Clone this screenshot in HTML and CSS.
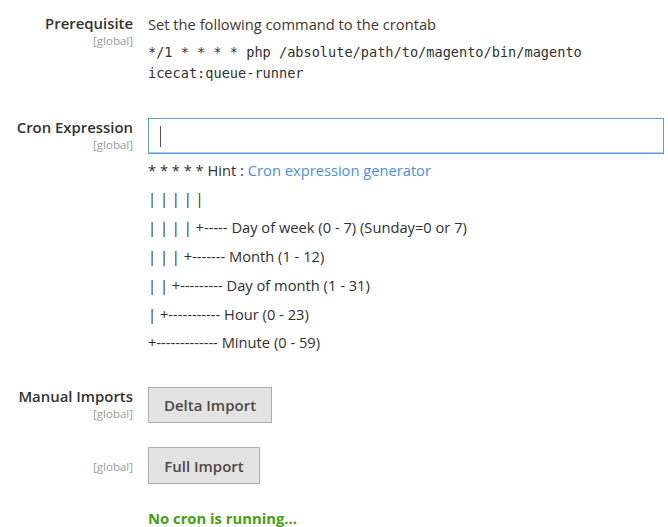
FILE: index.html
```html
<!DOCTYPE html>
<html>
<head>
<meta charset="utf-8">
<link rel="stylesheet" href="styles.css">
</head>
<body>
<div class="form">
  <div class="row row-prereq">
    <div class="label"><span class="name">Prerequisite</span><span class="scope">[global]</span></div>
    <div class="value">
      <div class="text">Set the following command to the crontab</div>
      <div class="code">*/1 * * * * php /absolute/path/to/magento/bin/magento<br>icecat:queue-runner</div>
    </div>
  </div>

  <div class="row row-cron">
    <div class="label"><span class="name">Cron Expression</span><span class="scope">[global]</span></div>
    <div class="value">
      <div class="input-wrap"><input class="input" type="text" value=""><span class="caret"></span></div>
      <div class="hint">
        <div class="line">* * * * * Hint : <a class="link" href="#">Cron expression generator</a></div>
        <div class="line">| | | | |</div>
        <div class="line">| | | | +----- Day of week (0 - 7) (Sunday=0 or 7)</div>
        <div class="line">| | | +------- Month (1 - 12)</div>
        <div class="line">| | +--------- Day of month (1 - 31)</div>
        <div class="line">| +----------- Hour (0 - 23)</div>
        <div class="line">+------------- Minute (0 - 59)</div>
      </div>
    </div>
  </div>

  <div class="row row-delta">
    <div class="label"><span class="name">Manual Imports</span><span class="scope">[global]</span></div>
    <div class="value"><button class="btn btn-delta" type="button">Delta Import</button></div>
  </div>

  <div class="row row-full">
    <div class="label label-only-scope"><span class="scope">[global]</span></div>
    <div class="value"><button class="btn btn-full" type="button">Full Import</button></div>
  </div>

  <div class="row row-status">
    <div class="label"></div>
    <div class="value"><div class="status">No cron is running...</div></div>
  </div>
</div>
</body>
</html>
```

FILE: styles.css
```css
html, body {
  margin: 0;
  padding: 0;
  background: #ffffff;
}

body {
  font-family: "Open Sans", "Noto Sans", sans-serif;
  font-size: 14.7px;
  color: #303030;
  overflow: hidden;
}

.form {
  display: flex;
  flex-direction: column;
  padding-top: 14px;
}

.row {
  display: grid;
  grid-template-columns: 133px 1fr;
  column-gap: 15px;
}

.label {
  display: flex;
  flex-direction: column;
  align-items: flex-end;
  text-align: right;
}

.name {
  font-weight: 600;
  font-size: 14.9px;
  line-height: 19px;
  color: #333333;
  white-space: nowrap;
}

.scope {
  font-size: 11.5px;
  line-height: 13px;
  color: #9a9a9a;
  margin-top: 1px;
  white-space: nowrap;
}

.value {
  display: flex;
  flex-direction: column;
  align-items: flex-start;
}

.text {
  line-height: 20px;
  color: #41362f;
}

.code {
  font-family: "DejaVu Sans Mono", "Liberation Mono", monospace;
  font-size: 13.6px;
  line-height: 21px;
  margin-top: 8px;
  color: #303030;
}

.row-cron {
  margin-top: 34px;
}

.input-wrap {
  position: relative;
  width: 516px;
  height: 36px;
}

.input {
  box-sizing: border-box;
  width: 516px;
  height: 36px;
  margin: 0;
  border: 1px solid #5b9ce2;
  border-radius: 0;
  padding: 0 10px;
  background: #fff;
  outline: none;
  font-family: "Open Sans", sans-serif;
  font-size: 14px;
  box-shadow: inset 0 -1px 0 #a9cbf0;
}

.caret {
  position: absolute;
  left: 12px;
  top: 8px;
  width: 1px;
  height: 21px;
  background: #555555;
}

.hint {
  display: flex;
  flex-direction: column;
  margin-top: 1.6px;
}

.line {
  line-height: 28.8px;
  height: 28.8px;
  color: #303030;
  white-space: pre;
}

.link {
  color: #4a8fe0;
  text-decoration: none;
}

.row-delta {
  margin-top: 30px;
}

.btn {
  box-sizing: border-box;
  height: 36px;
  margin: 0;
  padding: 0;
  border: 1px solid #adadad;
  border-radius: 0;
  background: #e3e3e3;
  color: #514943;
  font-family: "Open Sans", sans-serif;
  font-size: 15px;
  font-weight: 600;
  line-height: 20px;
  text-align: center;
  white-space: nowrap;
}

.btn-delta {
  width: 124px;
}

.btn-full {
  width: 112px;
  height: 37px;
}

.row-full {
  margin-top: 24px;
}

.label-only-scope {
  padding-top: 12px;
}

.row-status {
  margin-top: 24px;
}

.status {
  font-weight: 700;
  font-size: 14.8px;
  line-height: 20px;
  color: #43a10e;
}
```
